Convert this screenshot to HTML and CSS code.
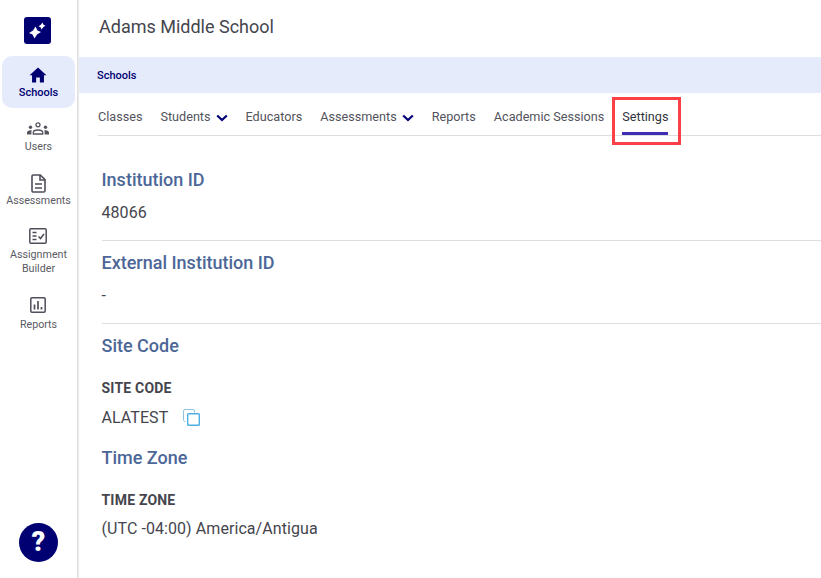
FILE: index.html
```html
<!DOCTYPE html>
<html lang="en">
<head>
<meta charset="utf-8">
<title>Adams Middle School</title>
<link rel="stylesheet" href="styles.css">
</head>
<body>
<div class="app">
  <aside class="sidebar">
    <div class="logo">
      <svg width="27" height="27" viewBox="0 0 27 27"><rect width="27" height="27" rx="3" fill="#000073"/><path d="M11.500 9.500L13.500 13.500 17 15 13 17.500 10.500 21.500 8.500 17.500 5 16 9 13.500z" fill="#fff"/><path d="M18.500 5.500L19.500 7.800 21.500 8.700 19.400 10 17.500 12.500 16.500 10.200 14.500 9.300 16.600 8z" fill="#fff"/></svg>
    </div>
    <nav class="side-nav">
      <a class="side-item active">
        <span class="ico"><svg width="18" height="16" viewBox="0 0 20 18"><path d="M10 .5L.5 9.200h2.800V17.500h4.600v-5.800h4.200v5.800h4.600V9.200h2.800z" fill="#000073"/></svg></span>
        <span>Schools</span>
      </a>
      <a class="side-item">
        <span class="ico"><svg class="up" width="22" height="13" viewBox="0 0 22 13" fill="#55555f"><circle cx="11" cy="2.800" r="2" fill="none" stroke="#55555f" stroke-width="1.300"/><circle cx="3.500" cy="5.200" r="1.700"/><circle cx="18.500" cy="5.200" r="1.700"/><path d="M0 12.500v-1.700c0-1.600 1.300-2.500 3.500-2.500.5 0 .9 0 1.300.2-.3.500-.4 1-.4 2v2zM22 12.500v-1.700c0-1.600-1.300-2.500-3.500-2.500-.5 0-.9 0-1.300.2.300.5.400 1 .4 2v2z"/><path d="M6.300 12v-1.500c0-1.700 2-2.500 4.700-2.500s4.700.8 4.700 2.500V12z" fill="none" stroke="#55555f" stroke-width="1.300"/></svg></span>
        <span>Users</span>
      </a>
      <a class="side-item">
        <span class="ico"><svg width="15" height="19" viewBox="0 0 15 19" fill="none" stroke="#4f4f5c" stroke-width="1.600"><path d="M2.300 1h7L14 5.700V16.700c0 .7-.6 1.300-1.300 1.300H2.300C1.600 18 1 17.400 1 16.700V2.300C1 1.600 1.600 1 2.300 1z"/><path d="M9 1v5h5M4 10h7M4 14h7"/></svg></span>
        <span>Assessments</span>
      </a>
      <a class="side-item">
        <span class="ico"><svg class="up" width="18" height="16" viewBox="0 0 18 16" fill="none" stroke="#4f4f5c" stroke-width="1.500"><rect x=".8" y=".8" width="16.400" height="14.400" rx="1.200"/><path d="M3.500 4.500h4M3.500 8h4M3.500 11.500h4"/><path d="M9.500 8.500l2 2L15 6" stroke-width="1.600"/></svg></span>
        <span>Assignment<br>Builder</span>
      </a>
      <a class="side-item reports">
        <span class="ico"><svg width="16" height="16" viewBox="0 0 16 16" fill="none" stroke="#4f4f5c" stroke-width="1.500"><rect x=".8" y=".8" width="14.400" height="14.400" rx="1.200"/><path d="M4.500 7.500v5M8 4v8.500M11.500 10v2.500" stroke-width="1.700"/></svg></span>
        <span>Reports</span>
      </a>
    </nav>
    <button class="help" type="button">?</button>
  </aside>
  <main class="main">
    <h1 class="school">Adams Middle School</h1>
    <div class="crumb"><a>Schools</a></div>
    <div class="tabs">
      <a class="tab">Classes</a>
      <a class="tab">Students<svg class="chev" width="12" height="8" viewBox="0 0 12 8"><path d="M1.200 1.500L6 6l4.800-4.500" fill="none" stroke="#000073" stroke-width="2.200"/></svg></a>
      <a class="tab">Educators</a>
      <a class="tab">Assessments<svg class="chev" width="12" height="8" viewBox="0 0 12 8"><path d="M1.200 1.500L6 6l4.800-4.500" fill="none" stroke="#000073" stroke-width="2.200"/></svg></a>
      <a class="tab">Reports</a>
      <a class="tab">Academic Sessions</a>
      <a class="tab current">Settings</a>
    </div>
    <section class="block ruled first">
      <h2>Institution ID</h2>
      <p class="value">48066</p>
    </section>
    <section class="block ruled second">
      <h2>External Institution ID</h2>
      <p class="value">-</p>
    </section>
    <section class="block third">
      <h2>Site Code</h2>
      <h3>SITE CODE</h3>
      <p class="value code">ALATEST
        <svg class="copy" width="17" height="17" viewBox="0 0 17 17" fill="none"><path d="M2.500 12.500A1.500 1.500 0 0 1 .5 11V2A1.500 1.500 0 0 1 2 .5h8A1.500 1.500 0 0 1 11.500 2v1.500" stroke="#8fc4e2" stroke-width="1"/><rect x="4.700" y="4.700" width="11.600" height="11.600" rx=".8" stroke="#4fb0e3" stroke-width="1.400"/></svg>
      </p>
    </section>
    <section class="block tz">
      <h2>Time Zone</h2>
      <h3>TIME ZONE</h3>
      <p class="value">(UTC -04:00) America/Antigua</p>
    </section>
  </main>
</div>
</body>
</html>
```
FILE: styles.css
```css
* { box-sizing: border-box; }
html, body { margin: 0; height: 100%; overflow: hidden; }
body { font-family: Roboto, "Liberation Sans", sans-serif; background: #fff; color: #45454d; }
.app { display: flex; height: 578px; width: 821px; }
.sidebar {
  width: 78px; flex: none; height: 100%;
  border-right: 1px solid #e0e0e0;
  box-shadow: 1px 0 1px #ececec;
  position: relative; z-index: 1;
  background: #fff;
  display: flex; flex-direction: column; align-items: center;
  padding: 17px 2px 16px 2px;
}
.logo { height: 27px; display: flex; justify-content: center; margin-bottom: 12px; margin-right: 2px; }
.side-nav { display: flex; flex-direction: column; width: 73px; }
.side-item {
  display: flex; flex-direction: column; align-items: center;
  font-size: 10.7px; line-height: 14px; color: #5a5a63; text-align: center;
  margin-bottom: 19px; gap: 1px;
}
.side-item span { white-space: nowrap; }
.ico { height: 20px; display: flex; align-items: center; justify-content: center; margin-right: 1px; }
.up { margin-bottom: 2px; }
.side-item.active {
  background: #e6ebfb; color: #000073; font-weight: 500; font-size: 11px;
  height: 52px; margin-bottom: 11px; padding-top: 9px; border-radius: 10px; gap: 1px;
}
.side-item.reports { gap: 3px; }
.help {
  margin-top: auto; width: 39px; height: 39px; border-radius: 50%; border: 0; padding: 0;
  background: #000073; color: #fff; font: 900 27px/39px Roboto, sans-serif;
}
.main { flex: 1; min-width: 0; }
.school { margin: 0; height: 57px; padding: 16px 0 0 21px; font-size: 18px; line-height: 22px; font-weight: 400; color: #45454d; }
.crumb { height: 36px; background: #e6ebfb; padding-left: 19px; font-size: 11px; line-height: 38px; font-weight: 500; color: #000073; }
.tabs { display: flex; gap: 18px; height: 43px; margin-left: 20px; border-bottom: 1px solid #dedede; font-size: 12.65px; }
.tab { display: flex; align-items: flex-start; gap: 5px; padding-top: 16px; line-height: 15px; color: #53535c; height: 43px; }
.chev { margin-top: 5px; }
.tab.current {
  color: #33333b; position: relative; border-bottom: 3px solid #3f2db5; height: 42px;
}
.tab.current::after {
  content: ""; position: absolute; left: -10px; right: -13px; top: 4px; height: 48px;
  box-sizing: border-box;
  border: 3px solid #fb4046;
}
.block { margin-left: 23.5px; }
h2 { margin: 0; font-size: 18px; line-height: 22px; font-weight: 500; color: #4c6797; }
h3 { margin: 23px 0 0; font-size: 14px; letter-spacing: .2px; line-height: 16px; font-weight: 700; color: #45454d; }
.value { margin: 12px 0 0; font-size: 16px; letter-spacing: .07px; line-height: 20px; color: #45454d; }
.ruled { border-bottom: 1px solid #dedede; }
.first { height: 105px; padding-top: 33px; }
.second { height: 83px; padding-top: 11px; }
.third { padding-top: 11px; }
.code { display: flex; align-items: center; gap: 14.5px; margin-top: 12px; }
.copy { margin-top: -2px; }
.block.tz { padding-top: 19px; }
.tz .value { margin-top: 11px; }
```
